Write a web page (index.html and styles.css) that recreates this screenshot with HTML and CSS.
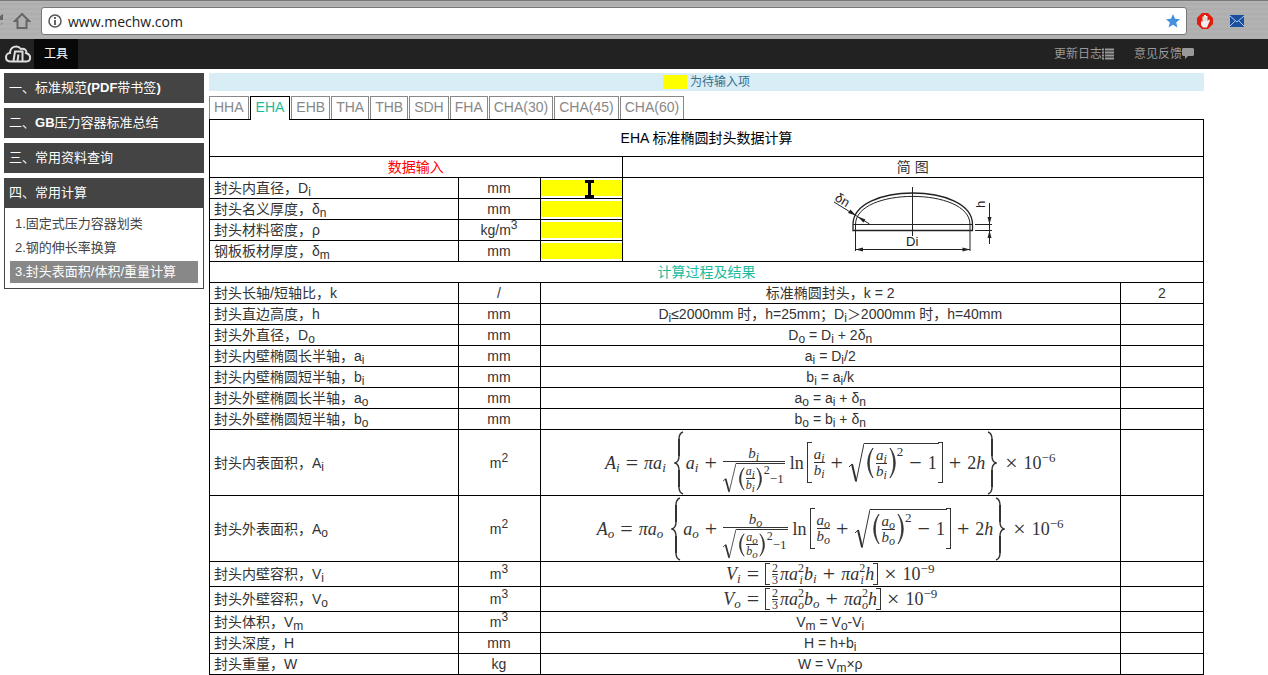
FILE: index.html
```
<!DOCTYPE html>
<html lang="zh-CN">
<head>
  <meta charset="UTF-8" />
  <meta name="viewport" content="width=device-width, initial-scale=1.0" />
  <title>EHA 标准椭圆封头数据计算</title>
  <link rel="stylesheet" href="styles.css">
</head>
<body>
  <!-- shared delimiters for the formulas -->
  <svg class="defs" width="0" height="0" aria-hidden="true">
    <symbol id="brace" viewBox="0 0 10 64">
      <path d="M9 1C6 2 5 4 5 8V25C5 29 4 31 1 32C4 33 5 35 5 39V56C5 60 6 62 9 63" fill="none" stroke="#333" stroke-width="1.4"/>
      <path d="M5 8V25M5 39V56" stroke="#333" stroke-width="2"/>
    </symbol>
    <symbol id="paren" viewBox="0 0 8 30" preserveAspectRatio="none">
      <path d="M7 1C0 9 0 21 7 29C2 21 2 9 7 1Z" fill="#333" stroke="#333" stroke-width=".8"/>
    </symbol>
    <symbol id="radical" viewBox="0 0 15 40" preserveAspectRatio="none">
      <path d="M0 24L3 21" stroke="#333" stroke-width="1"/>
      <path d="M3 21L7 38" stroke="#333" stroke-width="2"/>
      <path d="M7 39L15 .5" fill="none" stroke="#333" stroke-width="1"/>
    </symbol>
  </svg>

  <div class="browser">
    <svg class="reload" width="4" height="14" viewBox="0 0 4 14"><path d="M0 2L3 0V6H0M0 11Q2 11 3 8" fill="#666"/></svg>
    <button class="home" aria-label="主页">
      <svg width="18" height="18" viewBox="0 0 18 18"><path d="M9 2L2 9H4.500V16H13.500V9H16Z" fill="none" stroke="#666" stroke-width="2"/></svg>
    </button>
    <div class="address">
      <svg width="14" height="14" viewBox="0 0 14 14"><circle cx="7" cy="7" r="6" fill="none" stroke="#555" stroke-width="1.500"/><path d="M7 6V11M7 3V5" stroke="#555" stroke-width="1.800"/></svg>
      <input type="text" value="www.mechw.com" aria-label="地址">
      <svg width="14" height="14" viewBox="0 0 14 14"><path d="M7 0L9 4.800L14 5.200L10.200 8.500L11.400 13.500L7 10.800L2.600 13.500L3.800 8.500L0 5.200L5 4.800Z" fill="#4390df"/></svg>
    </div>
    <svg class="ext" width="16" height="16" viewBox="0 0 16 16">
      <path d="M5 0H11L16 5V11L11 16H5L0 11V5Z" fill="#e21b0c"/>
      <path d="M4 8L5.500 9V3.500H7V2H9V3H10.500V8L12 6.500L13 7.500L11 12L10 14.500H6L4 12Z" fill="#eee"/>
      <path d="M7.200 4V8M9 4V8" stroke="#bbb" stroke-width=".6"/>
    </svg>
    <svg class="ext" width="14" height="12" viewBox="0 0 14 12">
      <rect width="14" height="12" fill="#1d4f9f"/>
      <path d="M0 1L7 7L14 1M0 11L5 6M14 11L9 6" fill="none" stroke="#a9cbf5" stroke-width="1"/>
    </svg>
  </div>

  <nav class="navbar">
    <a class="logo" href="#" aria-label="mechw">
      <svg width="26" height="18" viewBox="0 0 26 18">
        <path d="M6 16.500C-1 16.500 0 8 5 8C5 2 12 -1 16 4C20 3 22 6 21 8C27 10 26 16.500 21 16.500Z" fill="none" stroke="#ddd" stroke-width="2"/>
        <path d="M8.500 16L10 6.500H17.500V16M12.500 16L13.500 9.500" fill="none" stroke="#ddd" stroke-width="2"/>
      </svg>
    </a>
    <a class="nav-item active" href="#">工具</a>
    <div class="nav-right">
      <a href="#">更新日志<svg width="12" height="12" viewBox="0 0 12 12"><path d="M0 1.500H2M3 1.500H12M0 4.500H2M3 4.500H12M0 7.500H2M3 7.500H12M0 10.500H2M3 10.500H12" stroke="#999" stroke-width="2"/></svg></a>
      <a href="#">意见反馈<svg width="12" height="12" viewBox="0 0 12 12"><path d="M1 0H11L12 1V7L11 8H6L3 11V8H1L0 7V1Z" fill="#999"/></svg></a>
    </div>
  </nav>

  <div class="page">
    <aside class="sidebar">
      <button class="menu-title">一、标准规范<b>(PDF</b>带书签<b>)</b></button>
      <button class="menu-title">二、<b>GB</b>压力容器标准总结</button>
      <button class="menu-title">三、常用资料查询</button>
      <div class="menu-group">
        <button class="menu-title">四、常用计算</button>
        <ul>
          <li><a href="#">1.固定式压力容器划类</a></li>
          <li><a href="#">2.钢的伸长率换算</a></li>
          <li><a class="current" href="#">3.封头表面积/体积/重量计算</a></li>
        </ul>
      </div>
    </aside>

    <main class="content">
      <div class="notice"><span class="swatch"></span>为待输入项</div>
      <div class="tabs">
        <a href="#">HHA</a>
        <a class="active" href="#">EHA</a>
        <a href="#">EHB</a>
        <a href="#">THA</a>
        <a href="#">THB</a>
        <a href="#">SDH</a>
        <a href="#">FHA</a>
        <a href="#">CHA(30)</a>
        <a href="#">CHA(45)</a>
        <a href="#">CHA(60)</a>
      </div>

      <table class="calc">
        <colgroup>
          <col class="col-name"><col class="col-unit"><col class="col-input"><col><col class="col-value">
        </colgroup>
        <tr class="title"><th colspan="5">EHA 标准椭圆封头数据计算</th></tr>
        <tr><th class="red" colspan="3">数据输入</th><th colspan="2">简 图</th></tr>
        <tr>
          <td><label for="di">封头内直径，D<sub>i</sub></label></td><td>mm</td>
          <td class="entry"><input id="di" type="text">
            <svg class="cursor" width="9" height="18" viewBox="0 0 9 18"><path d="M0 1.500H9M0 16.500H9M4.500 1V17" stroke="#000" stroke-width="3"/></svg>
          </td>
          <td class="figure" colspan="2" rowspan="4">
            <svg width="165" height="68" viewBox="830 186 165 68" fill="none" stroke="#222">
              <path d="M853 230.500V224.500C853 182.500 972.500 182.500 972.500 224.500V230.500Z" stroke-width="1.300"/>
              <path d="M855.500 251V224.500C855.500 187 970 187 970 224.500V251M853 224.500H972.500"/>
              <path d="M912.500 187V236M855.500 249.500H970M975 224.500H992M975 230.500H992M989.500 203V244M834 202L869.500 224"/>
              <g fill="#222" stroke="none">
                <path d="M855.500 249.500L863 247.500V251.500ZM970 249.500L962.500 247.500V251.500ZM989.500 224.500L987.500 217H991.500ZM989.500 230.500L987.500 238H991.500ZM856 215.500L848 213L850.500 209.500ZM857.500 216.500L863.500 222.500L865.500 219.500Z"/>
                <text x="906" y="246">Di</text>
                <text transform="translate(834 200) rotate(31)">δn</text>
                <text transform="translate(985 208) rotate(-90)">h</text>
              </g>
            </svg>
          </td>
        </tr>
        <tr><td><label for="dn">封头名义厚度，δ<sub>n</sub></label></td><td>mm</td><td class="entry"><input id="dn" type="text"></td></tr>
        <tr><td><label for="rho">封头材料密度，ρ</label></td><td>kg/m<sup>3</sup></td><td class="entry"><input id="rho" type="text"></td></tr>
        <tr><td><label for="dm">钢板板材厚度，δ<sub>m</sub></label></td><td>mm</td><td class="entry"><input id="dm" type="text"></td></tr>
        <tr><th class="green" colspan="5">计算过程及结果</th></tr>
        <tr><td>封头长轴/短轴比，k</td><td>/</td><td colspan="2">标准椭圆封头，k = 2</td><td>2</td></tr>
        <tr><td>封头直边高度，h</td><td>mm</td><td colspan="2">D<sub>i</sub>≤2000mm 时，h=25mm；D<sub>i</sub>＞2000mm 时，h=40mm</td><td></td></tr>
        <tr><td>封头外直径，D<sub>o</sub></td><td>mm</td><td colspan="2">D<sub>o</sub> = D<sub>i</sub> + 2δ<sub>n</sub></td><td></td></tr>
        <tr><td>封头内壁椭圆长半轴，a<sub>i</sub></td><td>mm</td><td colspan="2">a<sub>i</sub> = D<sub>i</sub>/2</td><td></td></tr>
        <tr><td>封头内壁椭圆短半轴，b<sub>i</sub></td><td>mm</td><td colspan="2">b<sub>i</sub> = a<sub>i</sub>/k</td><td></td></tr>
        <tr><td>封头外壁椭圆长半轴，a<sub>o</sub></td><td>mm</td><td colspan="2">a<sub>o</sub> = a<sub>i</sub> + δ<sub>n</sub></td><td></td></tr>
        <tr><td>封头外壁椭圆短半轴，b<sub>o</sub></td><td>mm</td><td colspan="2">b<sub>o</sub> = b<sub>i</sub> + δ<sub>n</sub></td><td></td></tr>
        <tr class="tall">
          <td>封头内表面积，A<sub>i</sub></td><td>m<sup>2</sup></td>
          <td colspan="2">
            <div class="math">
              <span><i>A<sub>i</sub></i></span><span class="rel">=</span><span><i>πa<sub>i</sub></i></span>
              <svg class="brace"><use href="#brace"/></svg>
              <span><i>a<sub>i</sub></i></span><span class="op">+</span>
              <span class="frac wide">
                <span class="num"><i>b<sub>i</sub></i></span>
                <span class="root small">
                  <svg class="radical"><use href="#radical"/></svg>
                  <span class="radicand">
                    <svg class="paren"><use href="#paren"/></svg>
                    <span class="frac"><span class="num"><i>a<sub>i</sub></i></span><span><i>b<sub>i</sub></i></span></span>
                    <svg class="paren right"><use href="#paren"/></svg>
                    <span class="power">2</span><span>−1</span>
                  </span>
                </span>
              </span>
              <span class="fn">ln</span>
              <span class="bracket">
                <span class="frac"><span class="num"><i>a<sub>i</sub></i></span><span><i>b<sub>i</sub></i></span></span>
                <span class="op">+</span>
                <span class="root">
                  <svg class="radical"><use href="#radical"/></svg>
                  <span class="radicand">
                    <svg class="paren"><use href="#paren"/></svg>
                    <span class="frac"><span class="num"><i>a<sub>i</sub></i></span><span><i>b<sub>i</sub></i></span></span>
                    <svg class="paren right"><use href="#paren"/></svg>
                    <span class="power">2</span><span class="op">−</span><span>1</span>
                  </span>
                </span>
              </span>
              <span class="op">+</span><span>2<i>h</i></span>
              <svg class="brace right"><use href="#brace"/></svg>
              <span class="op">×</span><span>10<sup>−6</sup></span>
            </div>
          </td><td></td>
        </tr>
        <tr class="tall">
          <td>封头外表面积，A<sub>o</sub></td><td>m<sup>2</sup></td>
          <td colspan="2">
            <div class="math">
              <span><i>A<sub>o</sub></i></span><span class="rel">=</span><span><i>πa<sub>o</sub></i></span>
              <svg class="brace"><use href="#brace"/></svg>
              <span><i>a<sub>o</sub></i></span><span class="op">+</span>
              <span class="frac wide">
                <span class="num"><i>b<sub>o</sub></i></span>
                <span class="root small">
                  <svg class="radical"><use href="#radical"/></svg>
                  <span class="radicand">
                    <svg class="paren"><use href="#paren"/></svg>
                    <span class="frac"><span class="num"><i>a<sub>o</sub></i></span><span><i>b<sub>o</sub></i></span></span>
                    <svg class="paren right"><use href="#paren"/></svg>
                    <span class="power">2</span><span>−1</span>
                  </span>
                </span>
              </span>
              <span class="fn">ln</span>
              <span class="bracket">
                <span class="frac"><span class="num"><i>a<sub>o</sub></i></span><span><i>b<sub>o</sub></i></span></span>
                <span class="op">+</span>
                <span class="root">
                  <svg class="radical"><use href="#radical"/></svg>
                  <span class="radicand">
                    <svg class="paren"><use href="#paren"/></svg>
                    <span class="frac"><span class="num"><i>a<sub>o</sub></i></span><span><i>b<sub>o</sub></i></span></span>
                    <svg class="paren right"><use href="#paren"/></svg>
                    <span class="power">2</span><span class="op">−</span><span>1</span>
                  </span>
                </span>
              </span>
              <span class="op">+</span><span>2<i>h</i></span>
              <svg class="brace right"><use href="#brace"/></svg>
              <span class="op">×</span><span>10<sup>−6</sup></span>
            </div>
          </td><td></td>
        </tr>
        <tr class="medium">
          <td>封头内壁容积，V<sub>i</sub></td><td>m<sup>3</sup></td>
          <td colspan="2">
            <div class="math">
              <span><i>V<sub>i</sub></i></span><span class="rel">=</span>
              <span class="bracket short">
                <span class="frac tight"><span class="num">2</span><span>3</span></span>
                <span><i>πa</i></span><span class="both"><span>2</span><i>i</i></span><span><i>b<sub>i</sub></i></span>
                <span class="op">+</span>
                <span><i>πa</i></span><span class="both"><span>2</span><i>i</i></span><span><i>h</i></span>
              </span>
              <span class="op">×</span><span>10<sup>−9</sup></span>
            </div>
          </td><td></td>
        </tr>
        <tr class="medium">
          <td>封头外壁容积，V<sub>o</sub></td><td>m<sup>3</sup></td>
          <td colspan="2">
            <div class="math">
              <span><i>V<sub>o</sub></i></span><span class="rel">=</span>
              <span class="bracket short">
                <span class="frac tight"><span class="num">2</span><span>3</span></span>
                <span><i>πa</i></span><span class="both"><span>2</span><i>o</i></span><span><i>b<sub>o</sub></i></span>
                <span class="op">+</span>
                <span><i>πa</i></span><span class="both"><span>2</span><i>o</i></span><span><i>h</i></span>
              </span>
              <span class="op">×</span><span>10<sup>−9</sup></span>
            </div>
          </td><td></td>
        </tr>
        <tr><td>封头体积，V<sub>m</sub></td><td>m<sup>3</sup></td><td colspan="2">V<sub>m</sub> = V<sub>o</sub>-V<sub>i</sub></td><td></td></tr>
        <tr><td>封头深度，H</td><td>mm</td><td colspan="2">H = h+b<sub>i</sub></td><td></td></tr>
        <tr><td>封头重量，W</td><td>kg</td><td colspan="2">W = V<sub>m</sub>×ρ</td><td></td></tr>
      </table>
    </main>
  </div>
</body>
</html>
```
FILE: styles.css
```
* {
  box-sizing: border-box;
}
body {
  margin: 0;
  font-family: "Liberation Sans", "Noto Sans CJK SC", sans-serif;
  font-size: 14px;
  line-height: 20px;
  color: #333;
  background: #fff;
}
a {
  text-decoration: none;
}
svg {
  flex-shrink: 0;
}
.defs {
  position: absolute;
}

/* browser bar */
.browser {
  display: flex;
  align-items: center;
  height: 39px;
  padding: 2px 24px 0 0;
  background: repeating-linear-gradient(#b5b5b5 0, #adadad 3px, #b2b2b2 5px);
  border-top: 1px solid #777;
}
.reload {
  margin-right: 9px;
}
.home {
  display: flex;
  padding: 0;
  margin-right: 10px;
  border: none;
  background: none;
}
.address {
  flex: 1;
  display: flex;
  align-items: center;
  gap: 6px;
  height: 28px;
  padding: 0 6px;
  margin-right: 10px;
  background: #fff;
  border: 1px solid #777;
  border-radius: 3px;
}
.address input {
  flex: 1;
  padding: 0;
  border: none;
  font-family: "Open Sans", sans-serif;
  font-size: 14px;
  color: #222;
}
.ext + .ext {
  margin-left: 17px;
}

/* navbar */
.navbar {
  display: flex;
  height: 30px;
  line-height: 30px;
  font-size: 12px;
  background: #222;
}
.logo {
  display: flex;
  align-items: center;
  padding: 0 3px 0 5px;
}
.nav-item {
  padding: 0 10px;
  color: #fff;
}
.nav-item.active {
  background: #080808;
}
.nav-right {
  display: flex;
  gap: 20px;
  margin-left: auto;
  padding-right: 74px;
}
.nav-right a {
  display: flex;
  align-items: center;
  color: #999;
}

/* layout */
.page {
  display: flex;
  gap: 5px;
  padding: 4px 64px 0 4px;
}
.sidebar {
  display: flex;
  flex-direction: column;
  gap: 5px;
  width: 200px;
  font-size: 13px;
}
.content {
  flex: 1;
}

/* sidebar menu */
.menu-title {
  display: block;
  width: 100%;
  height: 30px;
  padding: 0 5px;
  border: none;
  background: #444;
  color: #fff;
  font: inherit;
  text-align: left;
}
.menu-group ul {
  margin: 0;
  padding: 4px 5px;
  list-style: none;
  border: 1px solid #444;
  border-top: none;
}
.menu-group li {
  padding: 1px 0;
}
.menu-group li a {
  display: block;
  padding: 0 5px;
  line-height: 22px;
  color: #444;
}
.menu-group li a.current {
  background: #888;
  color: #fff;
}

/* notice and tabs */
.notice {
  display: flex;
  align-items: center;
  justify-content: center;
  gap: 3px;
  height: 18px;
  margin-bottom: 5px;
  font-size: 12px;
  background: #d9edf7;
  color: #31708f;
}
.swatch {
  width: 24px;
  height: 14px;
  background: #ff0;
}
.tabs {
  display: flex;
  gap: 1px;
}
.tabs a {
  height: 23px;
  padding: 0 4px;
  border: 1px solid #888;
  border-bottom: none;
  color: #888;
}
.tabs a.active {
  position: relative;
  height: 24px;
  padding: 0 5px;
  margin-bottom: -1px;
  background: #fff;
  border-color: #000;
  color: #1abc9c;
}

/* calculation table */
.calc {
  width: 100%;
  table-layout: fixed;
  border-collapse: collapse;
}
.col-name {
  width: 25%;
}
.col-unit,
.col-input {
  width: 82px;
}
.col-value {
  width: 83px;
}
.calc th,
.calc td {
  height: 21px;
  padding: 0;
  border: 1px solid #000;
  font-weight: normal;
  text-align: center;
}
.calc td:first-child {
  padding-left: 4px;
  text-align: left;
}
.calc .title th {
  height: 37px;
  color: #000;
}
.calc .red {
  color: #f00;
}
.calc .green {
  color: #1abc9c;
}
.calc .tall td {
  height: 66px;
}
.calc .medium td {
  height: 25px;
}
sub,
sup {
  font-size: 12px;
  line-height: 0;
}
sub {
  vertical-align: -3px;
}
.entry {
  position: relative;
}
.entry input {
  display: block;
  width: 100%;
  height: 16px;
  padding: 0;
  border: none;
  background: #ff0;
}
.cursor {
  position: absolute;
  left: 44px;
  top: 2px;
}
.figure svg {
  display: block;
  margin: 0 auto;
}
.figure text {
  font-size: 13px;
}

/* formulas */
.math {
  display: flex;
  align-items: center;
  justify-content: center;
  font-family: "Liberation Serif", serif;
  font-size: 18px;
}
.math sub,
.math sup {
  font-size: 13px;
}
.rel,
.op {
  margin: 0 6px;
  font-size: 22px;
}
.fn {
  margin: 0 3px 0 5px;
}
.brace {
  width: 10px;
  height: 64px;
  margin: 0 2px 0 8px;
}
.right {
  transform: scaleX(-1);
}
.brace.right {
  margin: 0 2px;
}
.frac {
  display: flex;
  flex-direction: column;
  align-items: center;
  font-size: 15px;
  line-height: 15px;
}
.frac .num {
  align-self: stretch;
  text-align: center;
  border-bottom: 1px solid #333;
}
.math .frac sub {
  font-size: 12px;
}
.frac.tight {
  font-size: 12px;
  line-height: 11px;
  margin-right: 2px;
}
.bracket {
  position: relative;
  display: flex;
  align-items: center;
  height: 41px;
  padding: 0 4px 0 7px;
}
.bracket::before,
.bracket::after {
  content: "";
  position: absolute;
  top: 0;
  bottom: 0;
  left: 0;
  width: 4px;
  border: 1px solid #333;
  border-right: none;
}
.bracket::after {
  left: auto;
  right: 0;
  border: 1px solid #333;
  border-left: none;
}
.bracket.short {
  height: 22px;
}
.root {
  display: flex;
  height: 40px;
}
.radical {
  width: 15px;
  height: 40px;
}
.radicand {
  display: flex;
  align-items: center;
  padding: 0 2px;
  border-top: 1px solid #333;
}
.paren {
  width: 8px;
  height: 32px;
  margin-right: 2px;
}
.paren.right {
  margin: 0 0 0 2px;
}
.power {
  align-self: flex-start;
  font-size: 13px;
  line-height: 16px;
}
/* numerator as tall as the root, so the bar sits on the math axis */
.wide > .num {
  padding-top: 14px;
  margin-bottom: 1px;
}
.wide .root {
  height: 30px;
  font-size: 13px;
}
.small .radical {
  width: 13px;
  height: 30px;
}
.small .radicand {
  padding: 0 1px;
}
.small .paren {
  width: 7px;
  height: 24px;
  margin: 0 1px;
}
.small .frac {
  font-size: 12px;
  line-height: 13px;
}
.math .small .frac sub {
  font-size: 11px;
}
.small .power {
  font-size: 12px;
  line-height: 12px;
}
.both {
  display: flex;
  flex-direction: column;
  font-size: 12px;
  line-height: 12px;
}
```
